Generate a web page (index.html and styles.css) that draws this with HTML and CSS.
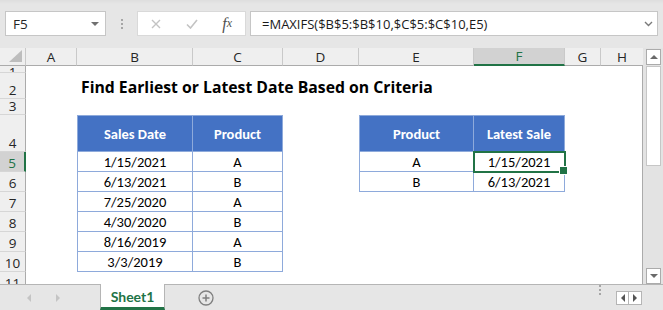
FILE: index.html
```html
<!DOCTYPE html>
<html>

<head>
    <title>Find Earliest or Latest Date Based on Criteria</title>

    <link rel="stylesheet" href="styles.css">
</head>

<body>
    <div class="excel">

        <!-- Name box + formula bar -->
        <div class="formula-bar">
            <div class="name-box">
                <span>F5</span>
                <span class="name-caret"></span>
            </div>
            <div class="grip"><i></i><i></i><i></i></div>
            <div class="fx-buttons">
                <span class="fx-btn">
                    <svg width="10" height="10" viewBox="0 0 10 10">
                        <path d="M1 1L9 9M9 1L1 9" stroke="#c3c3c3" stroke-width="1.4" fill="none" />
                    </svg>
                </span>
                <span class="fx-btn">
                    <svg width="12" height="10" viewBox="0 0 12 10">
                        <path d="M1 5.5L4.5 9L11 1" stroke="#c3c3c3" stroke-width="1.6" fill="none" />
                    </svg>
                </span>
                <span class="fx-btn fx">f<small>x</small></span>
            </div>
            <div class="formula">
                <span>=MAXIFS($B$5:$B$10,$C$5:$C$10,E5)</span>
                <svg width="9" height="6" viewBox="0 0 9 6">
                    <path d="M1 1L4.5 4.5L8 1" stroke="#7a7a7a" stroke-width="1.4" fill="none" />
                </svg>
            </div>
        </div>

        <!-- Sheet grid -->
        <div class="workspace">
            <div class="sheet">
                <table class="grid">
                    <colgroup>
                        <col class="w-row">
                        <col class="w-a">
                        <col class="w-b">
                        <col class="w-c">
                        <col class="w-d">
                        <col class="w-e">
                        <col class="w-f">
                        <col class="w-g">
                        <col class="w-h">
                    </colgroup>
                    <thead>
                        <tr class="r-head">
                            <th class="corner"><span></span></th>
                            <th>A</th>
                            <th>B</th>
                            <th>C</th>
                            <th>D</th>
                            <th>E</th>
                            <th class="sel-col">F</th>
                            <th>G</th>
                            <th class="last-col">H</th>
                        </tr>
                    </thead>
                    <tbody>
                        <tr class="r1">
                            <th class="row-num"><span>1</span></th>
                            <td></td><td></td><td></td><td></td><td></td><td></td><td></td><td></td>
                        </tr>
                        <tr class="r2">
                            <th class="row-num">2</th>
                            <td></td>
                            <td class="title" colspan="5">Find Earliest or Latest Date Based on Criteria</td>
                            <td></td><td></td>
                        </tr>
                        <tr class="r3">
                            <th class="row-num">3</th>
                            <td></td><td></td><td></td><td></td><td></td><td></td><td></td><td></td>
                        </tr>
                        <tr class="r4">
                            <th class="row-num">4</th>
                            <td></td>
                            <td class="hd first">Sales Date</td>
                            <td class="hd">Product</td>
                            <td></td>
                            <td class="hd first">Product</td>
                            <td class="hd">Latest Sale</td>
                            <td></td><td></td>
                        </tr>
                        <tr class="r-data">
                            <th class="row-num sel-row">5</th>
                            <td></td>
                            <td class="tb first">1/15/2021</td>
                            <td class="tb">A</td>
                            <td></td>
                            <td class="tb first">A</td>
                            <td class="tb active">1/15/2021</td>
                            <td></td><td></td>
                        </tr>
                        <tr class="r-data">
                            <th class="row-num">6</th>
                            <td></td>
                            <td class="tb first">6/13/2021</td>
                            <td class="tb">B</td>
                            <td></td>
                            <td class="tb first">B</td>
                            <td class="tb">6/13/2021</td>
                            <td></td><td></td>
                        </tr>
                        <tr class="r-data">
                            <th class="row-num">7</th>
                            <td></td>
                            <td class="tb first">7/25/2020</td>
                            <td class="tb">A</td>
                            <td></td><td></td><td></td><td></td><td></td>
                        </tr>
                        <tr class="r-data">
                            <th class="row-num">8</th>
                            <td></td>
                            <td class="tb first">4/30/2020</td>
                            <td class="tb">B</td>
                            <td></td><td></td><td></td><td></td><td></td>
                        </tr>
                        <tr class="r-data">
                            <th class="row-num">9</th>
                            <td></td>
                            <td class="tb first">8/16/2019</td>
                            <td class="tb">A</td>
                            <td></td><td></td><td></td><td></td><td></td>
                        </tr>
                        <tr class="r-data">
                            <th class="row-num">10</th>
                            <td></td>
                            <td class="tb first">3/3/2019</td>
                            <td class="tb">B</td>
                            <td></td><td></td><td></td><td></td><td></td>
                        </tr>
                        <tr class="r-data">
                            <th class="row-num">11</th>
                            <td></td><td></td><td></td><td></td><td></td><td></td><td></td><td></td>
                        </tr>
                    </tbody>
                </table>
            </div>

            <div class="vscroll">
                <div class="vs-btn"><span class="tri-up"></span></div>
                <div class="vs-thumb"></div>
                <div class="vs-track"></div>
                <div class="vs-btn"><span class="tri-down"></span></div>
            </div>
        </div>

        <!-- Sheet tabs -->
        <div class="tab-bar">
            <div class="tab-nav">
                <span class="tri-left"></span>
                <span class="tri-right"></span>
            </div>
            <div class="tab">Sheet1</div>
            <div class="add-sheet">
                <svg width="16" height="16" viewBox="0 0 16 16">
                    <circle cx="8" cy="8" r="7" stroke="#7f7f7f" stroke-width="1.3" fill="none" />
                    <path d="M8 4.5V11.5M4.5 8H11.5" stroke="#7f7f7f" stroke-width="1.5" />
                </svg>
            </div>
            <div class="tab-space"></div>
            <div class="grip"><i></i><i></i><i></i></div>
            <div class="hs-btns">
                <span class="hs-btn"><span class="tri-left dark"></span></span>
                <span class="hs-btn"><span class="tri-right dark"></span></span>
            </div>
        </div>

    </div>
</body>

</html>
```

FILE: styles.css
```css
* {
    box-sizing: border-box;
}

body {
    margin: 0;
    font-family: "Open Sans", "Noto Sans", sans-serif;
    background-color: #e6e6e6;
}

.excel {
    width: 663px;
    height: 310px;
    overflow: hidden;
    background-color: #e6e6e6;
}

/* ---------- formula bar ---------- */

.formula-bar {
    display: flex;
    align-items: center;
    height: 48px;
    padding: 11px 5px 12px 5px;
    background: linear-gradient(#dedede, #e6e6e6 4px);
}

.name-box {
    width: 101px;
    height: 25px;
    background-color: #fff;
    border: 1px solid #c6c6c6;
    display: flex;
    align-items: center;
    justify-content: space-between;
    padding: 0 6px 0 7px;
    font-size: 13.5px;
    color: #262626;
}

.name-caret {
    border-left: 4px solid transparent;
    border-right: 4px solid transparent;
    border-top: 4px solid #707070;
}

.grip {
    width: 31px;
    display: flex;
    flex-direction: column;
    align-items: center;
    gap: 2px;
}

.grip i {
    width: 2px;
    height: 2px;
    background-color: #a6a6a6;
}

.fx-buttons {
    width: 109px;
    height: 25px;
    background-color: #fff;
    border: 1px solid #d9d9d9;
    display: flex;
    align-items: center;
}

.fx-btn {
    width: 36px;
    display: flex;
    justify-content: center;
    align-items: center;
}

.fx {
    font-family: "Liberation Serif", serif;
    font-style: italic;
    font-size: 16px;
    color: #505050;
}

.fx small {
    font-size: 12px;
}

.formula {
    margin-left: 4px;
    flex: 1;
    height: 25px;
    background-color: #fff;
    border: 1px solid #c6c6c6;
    display: flex;
    align-items: center;
    justify-content: space-between;
    padding: 0 4px 0 11px;
    font-size: 13px;
    color: #1a1a1a;
}

/* ---------- sheet ---------- */

.workspace {
    display: flex;
    height: 236px;
}

.sheet {
    width: 643px;
    overflow: hidden;
    background-color: #fff;
}

.grid {
    border-collapse: separate;
    border-spacing: 0;
    table-layout: fixed;
    width: 643px;
}

.w-row { width: 26px; }
.w-a { width: 51px; }
.w-b { width: 116px; }
.w-c { width: 90px; }
.w-d { width: 76px; }
.w-e { width: 115px; }
.w-f { width: 91px; }
.w-g { width: 36px; }
.w-h { width: 42px; }

.grid th,
.grid td {
    padding: 0;
    white-space: nowrap;
}

.r-head { height: 18px; }
.r1 { height: 7px; }
.r2 { height: 26px; }
.r3 { height: 15px; }
.r4 { height: 37px; }
.r-data { height: 20px; }

.r-head th {
    background-color: #efefef;
    border-right: 1px solid #c9c9c9;
    border-bottom: 1px solid #ababab;
    font-size: 13.5px;
    font-weight: normal;
    color: #262626;
    line-height: 16px;
}

.r-head th.last-col {
    border-right: none;
}

.r-head .sel-col {
    background-color: #d2d2d2;
    color: #217346;
    border-bottom: 2px solid #217346;
}

.corner {
    position: relative;
}

.corner span {
    position: absolute;
    right: 3px;
    bottom: 3px;
    border-left: 13px solid transparent;
    border-bottom: 12px solid #bdbdbd;
}

.row-num {
    background-color: #efefef;
    border-right: 1px solid #ababab;
    border-bottom: 1px solid #d6d6d6;
    font-size: 13.5px;
    font-weight: normal;
    color: #262626;
    line-height: 14px;
    padding-bottom: 1px !important;
    vertical-align: bottom;
    text-align: center;
}

.r1 .row-num {
    padding-bottom: 0 !important;
}

.r1 .row-num span {
    display: block;
    height: 6px;
    overflow: hidden;
    line-height: 12px;
}

.row-num.sel-row {
    background-color: #d2d2d2;
    color: #217346;
    border-right: 2px solid #217346;
}

.grid tbody td:last-child {
    border-right: 1px solid #ababab;
}

.title {
    font-family: "Open Sans", sans-serif;
    font-weight: bold;
    font-size: 15.75px;
    line-height: 20px;
    vertical-align: bottom;
    padding: 0 0 2px 4px !important;
    color: #000;
}

/* data tables */
.hd,
.tb {
    font-family: "Carlito", "Lato", sans-serif;
    text-align: center;
    border-right: 1px solid #8eaadb;
    border-bottom: 1px solid #8eaadb;
}

.hd {
    background-color: #4472c4;
    color: #fff;
    font-weight: bold;
    font-size: 14.5px;
    border-top: 1px solid #8eaadb;
    vertical-align: middle;
}

.tb {
    font-size: 14.5px;
    color: #000;
    vertical-align: bottom;
    line-height: 18px;
}

.hd.first,
.tb.first {
    border-left: 1px solid #8eaadb;
}

.tb.active {
    position: relative;
    outline: 2px solid #217346;
    outline-offset: -1px;
}

.tb.active::after {
    content: "";
    position: absolute;
    right: -4px;
    bottom: -4px;
    width: 7px;
    height: 7px;
    background-color: #217346;
    border: 1px solid #fff;
    z-index: 1;
}

/* ---------- vertical scrollbar ---------- */

.vscroll {
    width: 20px;
    display: flex;
    flex-direction: column;
    padding: 1px 2px 0 3px;
    background-color: #e3e3e3;
}

.vs-btn {
    height: 16px;
    flex-shrink: 0;
    background-color: #fff;
    border: 1px solid #ababab;
    display: flex;
    align-items: center;
    justify-content: center;
}

.vs-thumb {
    height: 100px;
    flex-shrink: 0;
    margin-top: 1px;
    background-color: #fff;
    border: 1px solid #c6c6c6;
}

.vs-track {
    flex: 1;
}

.tri-up {
    border-left: 4px solid transparent;
    border-right: 4px solid transparent;
    border-bottom: 4px solid #6a6a6a;
}

.tri-down {
    border-left: 4px solid transparent;
    border-right: 4px solid transparent;
    border-top: 4px solid #6a6a6a;
}

/* ---------- tab bar ---------- */

.tab-bar {
    display: flex;
    height: 26px;
    border-top: 1px solid #b5b5b5;
    background-color: #e6e6e6;
}

.tab-nav {
    width: 100px;
    display: flex;
    align-items: center;
    gap: 25px;
    padding-left: 27px;
}

.tri-left {
    border-top: 4px solid transparent;
    border-bottom: 4px solid transparent;
    border-right: 4px solid #c4c4c4;
}

.tri-right {
    border-top: 4px solid transparent;
    border-bottom: 4px solid transparent;
    border-left: 4px solid #c4c4c4;
}

.tri-left.dark {
    border-right-color: #555;
}

.tri-right.dark {
    border-left-color: #555;
}

.tab {
    width: 65px;
    margin-top: -1px;
    background-color: #fff;
    border-left: 1px solid #b5b5b5;
    border-right: 1px solid #b5b5b5;
    border-bottom: 3px solid #217346;
    display: flex;
    align-items: center;
    justify-content: center;
    font-family: "Lato", sans-serif;
    font-weight: bold;
    font-size: 14px;
    color: #217346;
    padding-top: 2px;
}

.add-sheet {
    width: 82px;
    display: flex;
    align-items: center;
    justify-content: center;
}

.tab-space {
    flex: 1;
}

.tab-bar .grip {
    width: 20px;
    margin-right: 6px;
}

.hs-btns {
    display: flex;
    align-items: center;
    margin-right: 21px;
}

.hs-btn {
    width: 13px;
    height: 14px;
    background-color: #fff;
    border: 1px solid #b5b5b5;
    display: flex;
    align-items: center;
    justify-content: center;
}

.hs-btn + .hs-btn {
    border-left: none;
}
```
